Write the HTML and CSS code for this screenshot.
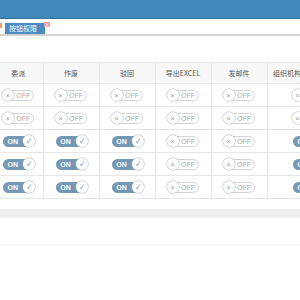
FILE: index.html
```html
<!DOCTYPE html>
<html lang="zh-CN">
<head>
    <meta charset="UTF-8">
    <title>按钮权限</title>
    <link rel="stylesheet" href="styles.css">
</head>
<body>
    <div class="topbar"></div>

    <!-- open tabs -->
    <div class="tabs">
        <span class="prev-tab"></span>
        <div class="tab">按钮权限<span class="tab-close">×</span></div>
    </div>

    <div class="content">
        <div class="table-wrap">
            <table class="perm-table">
                <colgroup>
                    <col class="col-first">
                    <col class="col-mid">
                    <col class="col-mid">
                    <col class="col-mid">
                    <col class="col-mid">
                    <col class="col-last">
                </colgroup>
                <thead>
                    <tr>
                        <th class="first">委派</th>
                        <th>作废</th>
                        <th>驳回</th>
                        <th>导出EXCEL</th>
                        <th>发邮件</th>
                        <th>组织机构部门数据权限</th>
                    </tr>
                </thead>
                <tbody id="rows"></tbody>
            </table>
        </div>
        <div class="scroll-track"></div>
        <div class="panel-end"></div>
    </div>

    <script>
        // on/off state per row: first three columns and the last follow it, export and mail stay off
        var states = [false, false, true, true, true];
        var tbody = document.getElementById('rows');

        function toggleHtml(on) {
            if (on) {
                return '<span class="sw sw-on"><span class="sw-text">ON</span><span class="knob">&#10003;</span></span>';
            }
            return '<span class="sw sw-off"><span class="knob">&times;</span><span class="sw-text">OFF</span></span>';
        }

        states.forEach(function (on) {
            var tr = document.createElement('tr');
            var html = '';
            for (var i = 0; i < 6; i++) {
                var cellOn = (i < 3 || i === 5) ? on : false;
                html += '<td' + (i === 0 ? ' class="first"' : '') + '>' + toggleHtml(cellOn) + '</td>';
            }
            tr.innerHTML = html;
            tbody.appendChild(tr);
        });
    </script>
</body>
</html>
```

FILE: styles.css
```css
body {
    margin: 0;
    background: #fff;
    font-family: "Noto Sans CJK SC", "Liberation Sans", sans-serif;
    overflow: hidden;
}
.topbar {
    height: 18px;
    background: #3f89ba;
    border-bottom: 1px solid #34739d;
}
.tabs {
    display: flex;
    align-items: flex-end;
    height: 15px;
    padding-left: 5px;
    border-bottom: 2px solid #d2d2d2;
}
.prev-tab {
    position: absolute;
    left: 0;
    top: 23px;
    width: 2px;
    height: 5px;
    background: #e9a070;
}
.tab {
    position: relative;
    height: 11px;
    line-height: 11px;
    padding: 0 8px 0 4px;
    background: #4a8cc2;
    color: #fff;
    font-size: 7px;
}
.tab-close {
    position: absolute;
    right: -5px;
    top: -1px;
    width: 6px;
    height: 5px;
    line-height: 5px;
    background: #e99aa6;
    color: #fff;
    font-size: 6px;
    text-align: center;
}
.content {
    padding-top: 26px;
}
.table-wrap {
    overflow: hidden;
}
.perm-table {
    width: 349px;
    table-layout: fixed;
    border-collapse: collapse;
}
.col-first { width: 43px; }
.col-mid { width: 56px; }
.col-last { width: 82px; }
.perm-table th,
.perm-table td {
    padding: 0;
    text-align: center;
    border: 1px solid #e6e6e6;
    white-space: nowrap;
    overflow: hidden;
}
.perm-table th {
    height: 20px;
    background: #f8f8f8;
    color: #555;
    font-weight: normal;
    font-size: 7px;
    line-height: 10px;
}
.perm-table td {
    height: 22px;
    font-size: 0;
    line-height: 0;
}
.perm-table .first {
    border-left: none;
    padding-right: 6px;
}

/* switches */
.sw {
    display: inline-flex;
    align-items: center;
    box-sizing: border-box;
    width: 31px;
    height: 11px;
    border-radius: 6px;
    vertical-align: middle;
    font-family: "Liberation Sans", sans-serif;
    font-size: 7px;
    line-height: 1;
}
.sw .knob {
    flex: none;
    width: 12px;
    height: 12px;
    border-radius: 50%;
    background: #fff;
    box-shadow: 0 0 1px 0.5px #b5b5b5;
    display: flex;
    align-items: center;
    justify-content: center;
    font-size: 7px;
}
.sw-off {
    border: 1px solid #d4d4d4;
    background: #fff;
}
.sw-off .knob {
    margin-left: -2px;
    color: #999;
}
.sw-off .sw-text {
    flex: 1;
    text-align: center;
    color: #aaa;
}
.sw-on {
    background: #7399b5;
}
.sw-on .sw-text {
    flex: 1;
    text-align: center;
    color: #fff;
    font-weight: bold;
}
.sw-on .knob {
    margin-right: -1px;
    color: #8aa6bb;
    font-size: 6px;
    font-weight: bold;
}
.scroll-track {
    height: 9px;
    margin-top: 10px;
    background: #f0f0f0;
}
.panel-end {
    height: 26px;
    border-bottom: 2px solid #f6f6f6;
}
```
